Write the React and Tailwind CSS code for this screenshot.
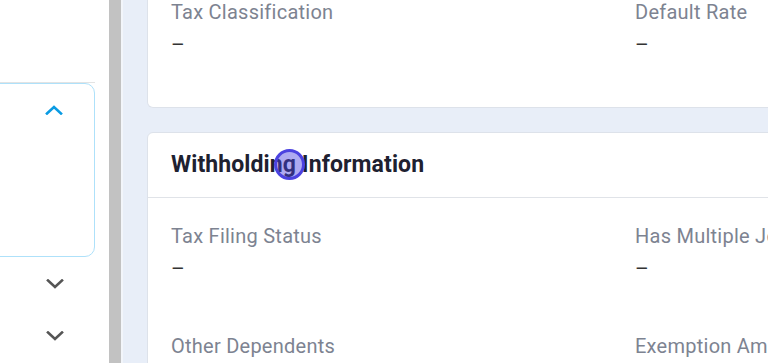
import React from "react";

function ChevronUp({ className }) {
  return (
    <svg width="18" height="10" viewBox="0 0 18 10" className={className} fill="none">
      <path d="M2 8.5 L9 2 L16 8.5" stroke="currentColor" strokeWidth="2.6" strokeLinecap="square" />
    </svg>
  );
}
function ChevronDown({ className }) {
  return (
    <svg width="18" height="10" viewBox="0 0 18 10" className={className} fill="none">
      <path d="M2 1.5 L9 8 L16 1.5" stroke="currentColor" strokeWidth="2.6" strokeLinecap="square" />
    </svg>
  );
}

function Field({ label, wide }) {
  return (
    <div className={wide ? "w-[464px] shrink-0" : "w-[300px] shrink-0"}>
      <div className="text-[20px] leading-[24px] tracking-[0.25px] text-[#7d8391] whitespace-nowrap">{label}</div>
      <div className="mt-[9px] text-[21px] leading-[24px] text-[#333]">–</div>
    </div>
  );
}

export default function App() {
  return (
    <div className="relative flex w-[768px] h-[363px] overflow-hidden bg-white" style={{ fontFamily: "Roboto, 'Liberation Sans', sans-serif" }}>
      {/* Sidebar */}
      <div className="w-[109px] shrink-0 bg-white flex flex-col">
        <div className="h-[82px]" />
        <div className="w-[95px] h-px bg-[#e3e3e3]" />
        <div className="ml-[-20px] w-[115px] h-[174px] border border-[#aee1fa] rounded-[10px] flex justify-end">
          <div className="w-[80px] flex justify-center pt-[21px] pr-[1px]">
            <ChevronUp className="text-[#0a9be3]" />
          </div>
        </div>
        <div className="w-[95px] flex flex-col">
          <div className="flex justify-end pt-[22px]">
            <div className="w-[80px] flex justify-center">
              <ChevronDown className="text-[#555]" />
            </div>
          </div>
          <div className="flex justify-end pt-[42px]">
            <div className="w-[80px] flex justify-center">
              <ChevronDown className="text-[#555]" />
            </div>
          </div>
        </div>
      </div>
      {/* Scrollbar */}
      <div className="w-[12px] shrink-0 bg-[#c2c2c2]" />
      <div className="w-[2px] shrink-0 bg-[#f2f5fa]" />
      {/* Main */}
      <div className="flex-1 bg-[#e8eef8] pl-[24px] overflow-hidden">
        <div className="w-[900px] flex flex-col gap-[24px]">
          {/* Top card */}
          <div className="bg-white border border-[#dde2ea] border-t-0 rounded-b-[6px] pl-[23px] pb-[50px] flex">
            <Field label="Tax Classification" wide />
            <Field label="Default Rate" />
          </div>
          {/* Withholding card */}
          <div className="bg-white border border-[#dde2ea] rounded-t-[6px]">
            <div className="h-[65px] border-b border-[#e0e3e8] pl-[23px] flex items-center">
              <h2 className="text-[23px] font-bold tracking-[0.1px] text-[#1e2130] leading-[28px]">Withholding Information</h2>
            </div>
            <div className="pl-[23px] pt-[26px] flex flex-col gap-[53px]">
              <div className="flex">
                <Field label="Tax Filing Status" wide />
                <Field label="Has Multiple Jobs" />
              </div>
              <div className="flex">
                <Field label="Other Dependents" wide />
                <Field label="Exemption Amount" />
              </div>
            </div>
          </div>
        </div>
      </div>
      {/* Cursor marker */}
      <div className="absolute left-[274px] top-[149px] w-[31px] h-[31px] rounded-full border-[3px] border-[#4b42e0] bg-[#4b42e0]/45 pointer-events-none" />
    </div>
  );
}
